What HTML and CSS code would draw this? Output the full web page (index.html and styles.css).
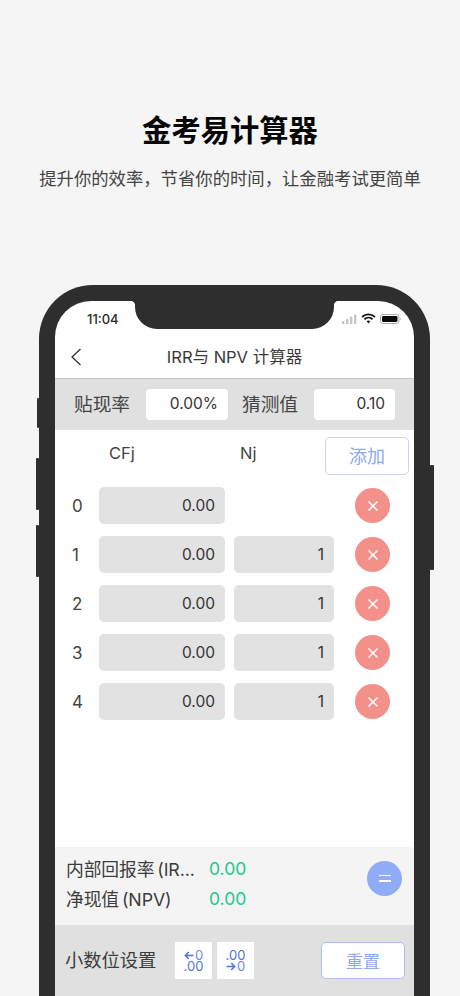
FILE: index.html
```html
<!DOCTYPE html>
<html lang="zh">
<head>
<meta charset="utf-8">
<title>金考易计算器</title>
<link rel="stylesheet" href="styles.css">
</head>
<body>
<header class="hero">
  <h1 class="hero-title">金考易计算器</h1>
  <p class="hero-sub">提升你的效率，节省你的时间，让金融考试更简单</p>
</header>
<div class="phone">
  <span class="side side-mute"></span>
  <span class="side side-up"></span>
  <span class="side side-down"></span>
  <span class="side side-power"></span>
  <div class="screen">
    <div class="notch"></div>
    <div class="status">
      <span class="time">11:04</span>
      <span class="status-icons">
        <svg width="15" height="10" viewBox="0 0 15 10"><rect x="0" y="7" width="2.4" height="3" rx=".5" fill="#c4c4c4"/><rect x="4" y="5" width="2.4" height="5" rx=".5" fill="#c4c4c4"/><rect x="8" y="2.500" width="2.4" height="7.500" rx=".5" fill="#c4c4c4"/><rect x="12" y="0.5" width="2.4" height="9.5" rx=".5" fill="#c4c4c4"/></svg>
        <svg width="15" height="11" viewBox="0 0 14 10"><path d="M1 3.6C4.5.4 9.5.4 13 3.6M3.2 5.7c2.2-2 5.400-2 7.600 0" fill="none" stroke="#111" stroke-width="1.7"/><path d="M5.3 7.6c1-.9 2.400-.9 3.400 0L7 9.6z" fill="#111"/></svg>
        <svg width="22" height="10" viewBox="0 0 22 10"><rect x=".5" y=".5" width="18.5" height="9" rx="2.6" fill="none" stroke="#aaa"/><rect x="2" y="2" width="15.5" height="6" rx="1.4" fill="#0a0a0a"/><path d="M20.2 3.5c.9.3.9 2.7 0 3z" fill="#aaa"/></svg>
      </span>
    </div>
    <nav class="nav">
      <svg class="back" width="12" height="18" viewBox="0 0 12 18"><path d="M10.5 1 2 9l8.500 8" fill="none" stroke="#333" stroke-width="1.300"/></svg>
      <span class="nav-title">IRR与 NPV 计算器</span>
    </nav>
    <section class="rates">
      <span class="rate-label">贴现率</span>
      <span class="rate-input">0.00%</span>
      <span class="rate-label">猜测值</span>
      <span class="rate-input">0.10</span>
    </section>
    <main class="table">
      <div class="table-head">
        <span class="head-cf">CFj</span>
        <span class="head-n">Nj</span>
        <button class="add">添加</button>
      </div>
      <div class="row">
        <span class="idx">0</span><span class="cell cf">0.00</span><span class="cell-empty"></span>
        <span class="del"><svg width="12" height="12" viewBox="0 0 12 12"><path d="M1.500 1.500l9 9M10.500 1.500l-9 9" stroke="#fff" stroke-width="1.500"/></svg></span>
      </div>
      <div class="row">
        <span class="idx">1</span><span class="cell cf">0.00</span><span class="cell nj">1</span>
        <span class="del"><svg width="12" height="12" viewBox="0 0 12 12"><path d="M1.500 1.500l9 9M10.500 1.500l-9 9" stroke="#fff" stroke-width="1.500"/></svg></span>
      </div>
      <div class="row">
        <span class="idx">2</span><span class="cell cf">0.00</span><span class="cell nj">1</span>
        <span class="del"><svg width="12" height="12" viewBox="0 0 12 12"><path d="M1.500 1.500l9 9M10.500 1.500l-9 9" stroke="#fff" stroke-width="1.500"/></svg></span>
      </div>
      <div class="row">
        <span class="idx">3</span><span class="cell cf">0.00</span><span class="cell nj">1</span>
        <span class="del"><svg width="12" height="12" viewBox="0 0 12 12"><path d="M1.500 1.500l9 9M10.500 1.500l-9 9" stroke="#fff" stroke-width="1.500"/></svg></span>
      </div>
      <div class="row">
        <span class="idx">4</span><span class="cell cf">0.00</span><span class="cell nj">1</span>
        <span class="del"><svg width="12" height="12" viewBox="0 0 12 12"><path d="M1.500 1.500l9 9M10.500 1.500l-9 9" stroke="#fff" stroke-width="1.500"/></svg></span>
      </div>
    </main>
    <section class="results">
      <div class="result-list">
        <div class="result"><span class="result-label">内部回报率 (IR...</span><span class="result-value">0.00</span></div>
        <div class="result"><span class="result-label">净现值 (NPV)</span><span class="result-value">0.00</span></div>
      </div>
      <span class="equals"><span class="eq-bar"></span><span class="eq-bar"></span></span>
    </section>
    <section class="tools">
      <span class="tools-label">小数位设置</span>
      <span class="dec">
        <span class="dec-line"><svg width="10" height="9" viewBox="0 0 10 9"><path d="M9.500 4.500H1.500M4.800 1 1.300 4.500 4.800 8" fill="none" stroke="#4f74d8" stroke-width="1.500"/></svg><span class="dec-light">0</span></span>
        <span class="dec-line">.00</span>
      </span>
      <span class="dec">
        <span class="dec-line">.00</span>
        <span class="dec-line"><svg width="10" height="9" viewBox="0 0 10 9"><path d="M.5 4.500H8.500M5.200 1 8.700 4.500 5.200 8" fill="none" stroke="#4f74d8" stroke-width="1.500"/></svg><span class="dec-light">0</span></span>
      </span>
      <button class="reset">重置</button>
    </section>
  </div>
</div>
</body>
</html>
```
FILE: styles.css
```css
html, body {
  margin: 0;
  height: 996px;
  overflow: hidden;
  background: #f5f5f5;
}
body {
  font-family: "Inter", "Noto Sans CJK SC", sans-serif;
  color: #333;
}
.hero {
  height: 285px;
  box-sizing: border-box;
  padding-top: 112px;
  text-align: center;
}
.hero-title {
  margin: 0;
  font-size: 29.300px;
  line-height: 38px;
  font-weight: 700;
  color: #060606;
}
.hero-sub {
  margin: 17px 0 0;
  font-size: 17.350px;
  line-height: 24px;
  color: #444;
}
.phone {
  position: relative;
  box-sizing: border-box;
  width: 391px;
  height: 711px;
  margin-left: 39px;
  padding: 16px 16px 0;
  background: #2e2e2e;
  border-radius: 54px 54px 0 0;
}
.side {
  position: absolute;
  background: #2e2e2e;
  border-radius: 1px;
}
.side-mute { left: -2px; top: 113px; width: 2px; height: 30px; }
.side-up { left: -3px; top: 173px; width: 3px; height: 52px; }
.side-down { left: -3px; top: 240px; width: 3px; height: 52px; }
.side-power { right: -4px; top: 180px; width: 4px; height: 105px; }
.screen {
  position: relative;
  height: 695px;
  background: #fff;
  border-radius: 36px 36px 0 0;
  overflow: hidden;
  display: flex;
  flex-direction: column;
}
.notch {
  position: absolute;
  top: 0;
  left: 80px;
  width: 199px;
  height: 28px;
  background: #2e2e2e;
  border-radius: 0 0 22px 22px;
}
.notch::before,
.notch::after {
  content: "";
  position: absolute;
  top: 0;
  width: 5px;
  height: 5px;
}
.notch::before {
  left: -5px;
  background: radial-gradient(circle at 0 100%, transparent 5px, #2e2e2e 5.500px);
}
.notch::after {
  right: -5px;
  background: radial-gradient(circle at 100% 100%, transparent 5px, #2e2e2e 5.500px);
}
.status {
  height: 39px;
  flex: none;
  display: flex;
  justify-content: space-between;
  align-items: center;
  padding: 0 12px 4px 32px;
  box-sizing: border-box;
}
.time {
  font-size: 13px;
  font-weight: 500;
  color: #2a2a2a;
}
.status-icons {
  display: flex;
  align-items: center;
  gap: 4px;
}
.nav {
  position: relative;
  height: 39px;
  flex: none;
  box-sizing: border-box;
  padding-bottom: 5px;
  border-bottom: 1px solid #c6c6c6;
  display: flex;
  align-items: center;
  justify-content: center;
}
.back {
  position: absolute;
  left: 15px;
  top: 8px;
}
.nav-title {
  font-size: 16.500px;
  line-height: 24px;
  color: #3a3a3a;
}
.rates {
  height: 51px;
  flex: none;
  background: #e0e0e0;
  display: flex;
  align-items: center;
  padding: 0 0 0 19px;
  box-sizing: border-box;
}
.rate-label {
  flex: none;
  width: 72px;
  font-size: 18.700px;
  line-height: 26px;
  color: #444;
}
.rate-input {
  flex: none;
  width: 82px;
  height: 31px;
  box-sizing: border-box;
  margin-right: 14px;
  padding-right: 10px;
  background: #fff;
  border-radius: 4px;
  text-align: right;
  font-size: 15.500px;
  line-height: 30px;
  color: #333;
}
.rate-input:last-child {
  width: 81px;
  margin-right: 0;
}
.table {
  flex: 1;
  padding-top: 7px;
}
.table-head {
  position: relative;
  height: 50px;
  font-size: 16.500px;
  color: #444;
}
.head-cf {
  position: absolute;
  left: 54px;
  top: 6px;
}
.head-n {
  position: absolute;
  left: 185px;
  top: 6px;
}
.add {
  position: absolute;
  left: 270px;
  top: 0;
  width: 84px;
  height: 38px;
  padding: 0 0 2px;
  background: #fff;
  border: 1px solid #c7d4f7;
  border-radius: 5px;
  font: inherit;
  font-size: 18px;
  color: #8fa8f0;
}
.row {
  display: flex;
  align-items: center;
  height: 37px;
  margin-bottom: 12px;
}
.idx {
  width: 44px;
  padding-left: 17px;
  box-sizing: border-box;
  font-size: 17px;
  color: #444;
}
.cell {
  box-sizing: border-box;
  height: 37px;
  padding-right: 10px;
  background: #e2e2e2;
  border-radius: 5px;
  text-align: right;
  font-size: 15.500px;
  line-height: 38px;
  color: #333;
}
.cf { width: 126px; }
.nj { width: 100px; margin-left: 9px; }
.cell-empty { width: 100px; margin-left: 9px; }
.del {
  width: 35px;
  height: 35px;
  margin-left: 21px;
  border-radius: 50%;
  background: #f4908a;
  display: flex;
  align-items: center;
  justify-content: center;
}
.results {
  height: 78px;
  flex: none;
  background: #f4f4f4;
  display: flex;
  align-items: center;
  justify-content: space-between;
  padding: 0 12px 0 11px;
  box-sizing: border-box;
}
.result-list {
  display: flex;
  flex-direction: column;
  margin-bottom: 6px;
}
.result {
  display: flex;
  align-items: center;
  height: 30px;
}
.result-label {
  width: 143px;
  font-size: 17.800px;
  word-spacing: -2px;
  letter-spacing: -0.100px;
  white-space: nowrap;
  color: #3c3c3c;
}
.result-value {
  font-size: 17.500px;
  color: #20c88f;
}
.equals {
  width: 35px;
  height: 35px;
  margin-bottom: 16px;
  border-radius: 50%;
  background: #90acf6;
  display: flex;
  flex-direction: column;
  align-items: center;
  justify-content: center;
  gap: 4px;
}
.eq-bar {
  width: 12px;
  height: 1.500px;
  background: #fff;
}
.tools {
  height: 71px;
  flex: none;
  background: #e0e0e0;
  display: flex;
  align-items: flex-start;
  padding: 17px 9px 0 10px;
  box-sizing: border-box;
}
.tools-label {
  width: 110px;
  font-size: 18.300px;
  line-height: 36px;
  white-space: nowrap;
  color: #3c3c3c;
}
.dec {
  width: 37px;
  height: 37px;
  margin-right: 5px;
  background: #fff;
  display: flex;
  flex-direction: column;
  align-items: center;
  justify-content: center;
  font-size: 13px;
  line-height: 11px;
  color: #4f74d8;
}
.dec-line {
  display: flex;
  align-items: center;
  gap: 1px;
}
.dec-light { color: #6f8bdc; }
.reset {
  width: 84px;
  height: 37px;
  margin-left: auto;
  padding: 0;
  background: #fff;
  border: 1.500px solid #a9bef5;
  border-radius: 5px;
  font: inherit;
  font-size: 17px;
  color: #8fa8f0;
}
```
